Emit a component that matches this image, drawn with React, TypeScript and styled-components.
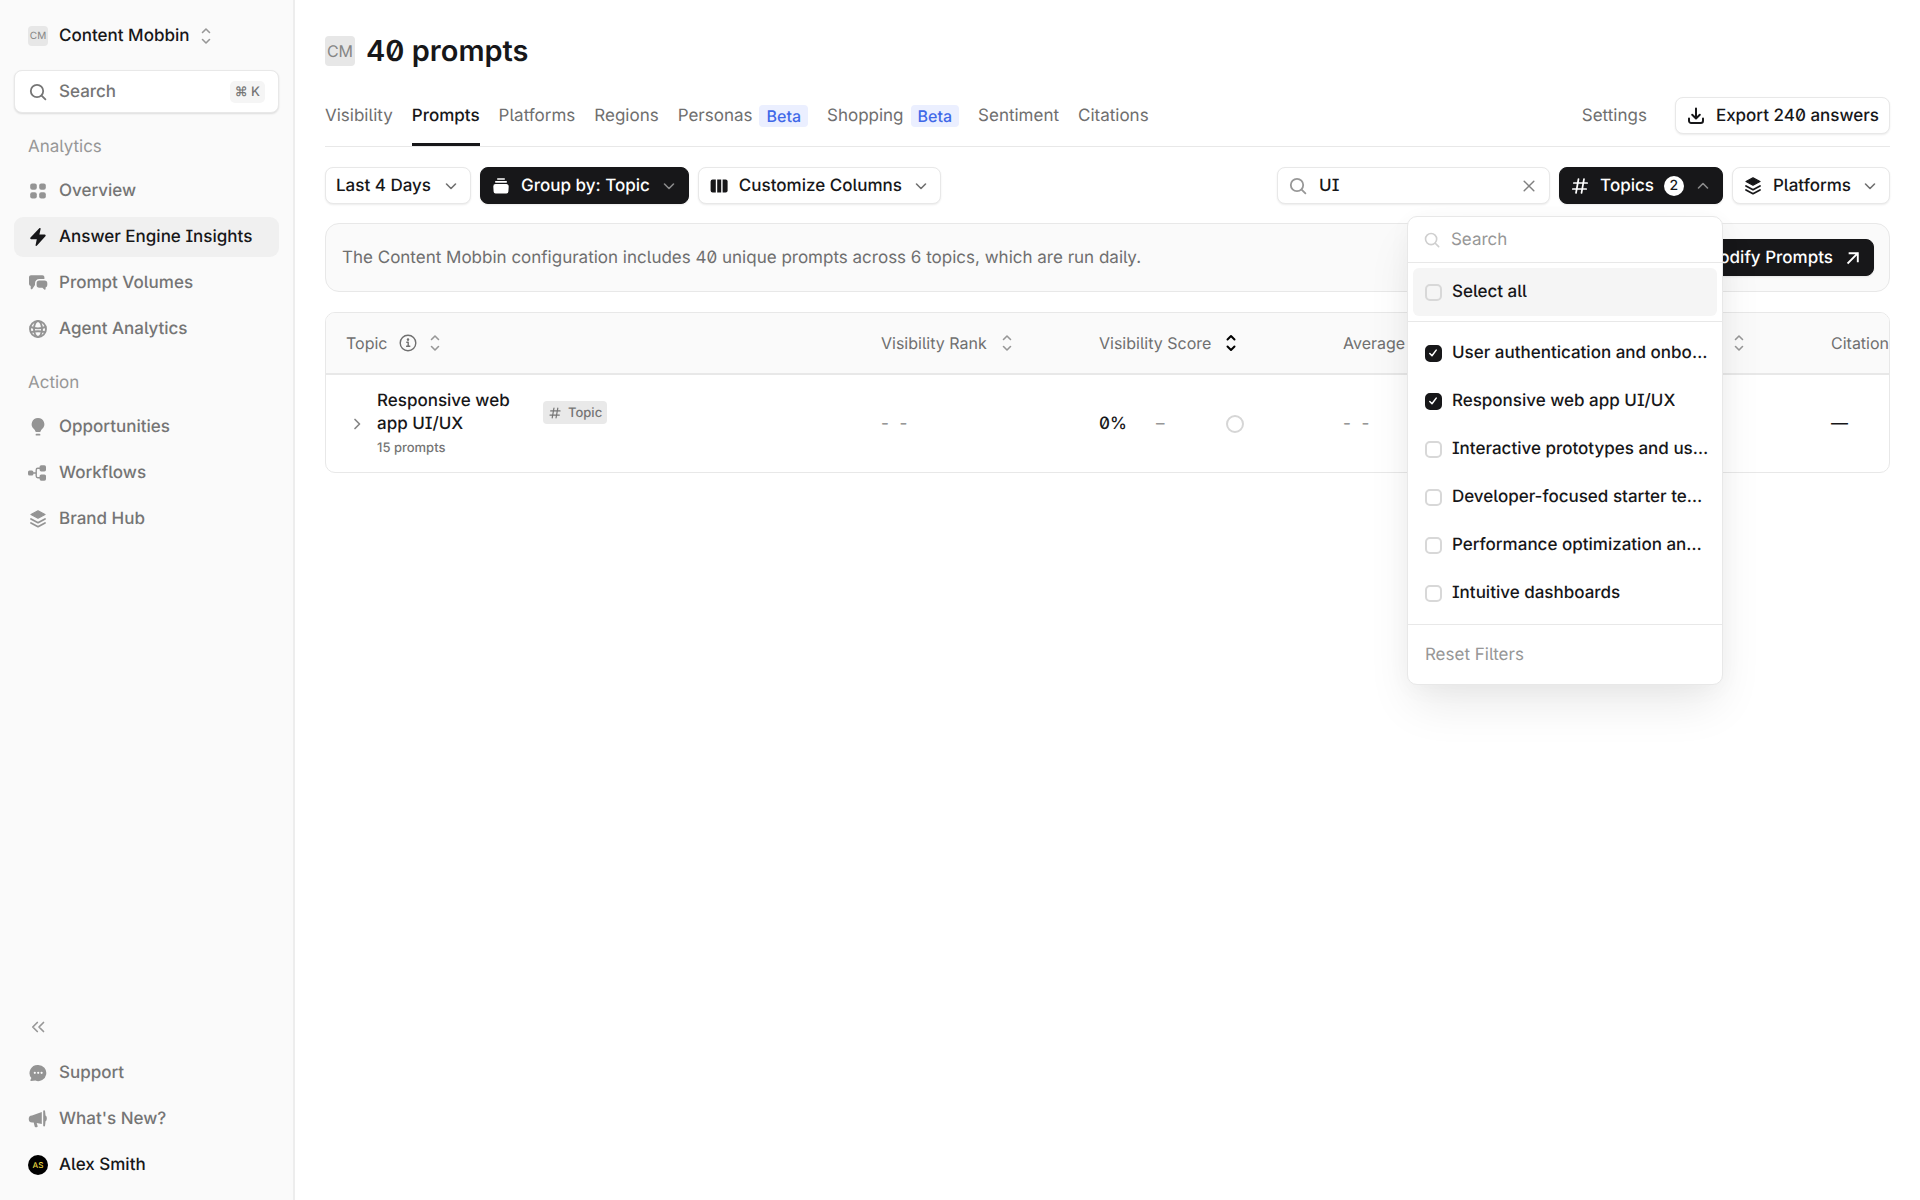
import React, { useState } from "react";
import styled, { createGlobalStyle, css } from "styled-components";

const c = {
  ink: "#171719",
  text: "#757575",
  muted: "#979797",
  line: "#e8e8e8",
  soft: "#fafafa",
};

const GlobalStyle = createGlobalStyle`
  *, *::before, *::after { box-sizing: border-box; }
  body {
    margin: 0;
    background: #fff;
    color: ${c.ink};
    font-family: Inter, "Liberation Sans", sans-serif;
    font-size: 17px;
    font-weight: 500;
    line-height: 24px;
    font-feature-settings: "ss02" 1, "zero" 1, "cv08" 1;
    text-rendering: geometricPrecision;
    -webkit-font-smoothing: antialiased;
  }
  button, input, select {
    font: inherit;
    font-feature-settings: inherit;
    text-rendering: inherit;
    color: inherit;
  }
  button { cursor: pointer; }
  h1, p { margin: 0; }
  svg { display: block; flex: none; }
`;

/* ---------- icons ---------- */

type IconProps = { size?: number };
const stroke = {
  fill: "none",
  stroke: "currentColor",
  strokeLinecap: "round" as const,
  strokeLinejoin: "round" as const,
};

const SearchIcon = ({ size = 20 }: IconProps) => (
  <svg width={size} height={size} viewBox="0 0 20 20" {...stroke} strokeWidth="1.8">
    <circle cx="9" cy="9" r="6.2" />
    <path d="M13.6 13.6 17.4 17.4" />
  </svg>
);
const SortIcon = ({ bold }: { bold?: boolean }) => (
  <svg width="12" height="18" viewBox="0 0 12 18" {...stroke} strokeWidth={bold ? 2 : 1.6}>
    <path d="M2.5 5.5 6 2l3.500 3.500M2.500 12.500 6 16l3.500-3.500" />
  </svg>
);
const ChevronDown = () => (
  <svg width="14" height="14" viewBox="0 0 14 14" {...stroke} strokeWidth="1.6">
    <path d="m2.500 5 4.500 4.500L11.500 5" />
  </svg>
);
const ChevronUp = () => (
  <svg width="14" height="14" viewBox="0 0 14 14" {...stroke} strokeWidth="1.6">
    <path d="m2.500 9 4.500-4.500L11.500 9" />
  </svg>
);
const ChevronRight = () => (
  <svg width="14" height="14" viewBox="0 0 14 14" {...stroke} strokeWidth="1.700">
    <path d="m5 2.500 4.500 4.500L5 11.500" />
  </svg>
);
const GridIcon = () => (
  <svg width="20" height="20" viewBox="0 0 20 20" fill="currentColor">
    <rect x="2.200" y="2.400" width="6.600" height="6.400" rx="2" />
    <rect x="11.200" y="2.400" width="6.600" height="6.400" rx="2" />
    <rect x="2.200" y="11.200" width="6.600" height="6.400" rx="2" />
    <rect x="11.200" y="11.200" width="6.600" height="6.400" rx="2" />
  </svg>
);
const BoltIcon = () => (
  <svg width="20" height="20" viewBox="0 0 20 20" fill="currentColor">
    <path d="M11.300 1.200c.7-.5 1.500 0 1.300.8l-1.200 5.600h5.200c1 0 1.400 1 .8 1.700L9 18.600c-.7.700-1.600.2-1.400-.7l1.200-5.700H3.200c-.9 0-1.300-1-.7-1.600z" />
  </svg>
);
const ChatsIcon = () => (
  <svg width="20" height="20" viewBox="0 0 20 20" fill="currentColor">
    <path d="M3 2.200h11.400c1.100 0 2 .9 2 2v1.900h-5.200a4.200 4.200 0 0 0-4.200 4.200v1.600L4.300 15.900c-.5.700-1.600.5-1.600-.5v-2.500A2 2 0 0 1 1 10.900V4.200c0-1.100.9-2 2-2z" />
    <path d="M11.300 7.600h5.300a2.700 2.700 0 0 1 2.700 2.700v1.700a2.600 2.600 0 0 1-1.700 2.500v1.600c0 .8-.8 1-1.300.5l-1.900-1.900h-3.100a2.700 2.700 0 0 1-2.700-2.700v-1.700a2.700 2.700 0 0 1 2.700-2.700z" />
  </svg>
);
const GlobeIcon = () => (
  <svg width="20" height="20" viewBox="0 0 20 20" {...stroke} strokeWidth="1.900">
    <circle cx="10" cy="10" r="8" />
    <ellipse cx="10" cy="10" rx="4" ry="8" />
    <path d="M2.500 8c4.500 1.600 10.500 1.600 15 0M3 13.200c4.200-1.200 9.800-1.200 14 0" />
  </svg>
);
const BulbIcon = () => (
  <svg width="20" height="20" viewBox="0 0 20 20" fill="currentColor">
    <path d="M10 .9a6.300 6.300 0 0 1 4.100 11.100c-.8.700-1.200 1.500-1.400 2.300-.1.500-.4.700-.9.700H8.200c-.5 0-.8-.2-.9-.7-.2-.8-.6-1.600-1.400-2.300A6.300 6.300 0 0 1 10 .9z" />
    <rect x="7.600" y="16.800" width="4.800" height="1.800" rx=".9" />
  </svg>
);
const FlowIcon = () => (
  <svg width="20" height="20" viewBox="0 0 20 20" fill="currentColor">
    <rect x="0" y="7.600" width="5.400" height="4.800" rx="1.500" />
    <rect x="11.600" y="2.200" width="6.400" height="6.200" rx="1.600" />
    <rect x="11.600" y="11.500" width="6.400" height="6.200" rx="1.600" />
    <path d="M5 10h3.200M12 5.300H9.800c-1 0-1.600.6-1.600 1.600v6.200c0 1 .6 1.600 1.600 1.600H12" fill="none" stroke="currentColor" strokeWidth="1.400" />
  </svg>
);
const LayersIcon = () => (
  <svg width="20" height="20" viewBox="0 0 20 20" {...stroke} strokeWidth="1.800">
    <path d="M10 1.800 17 5.500 10 9.200 3 5.500z" fill="currentColor" strokeWidth="1.200" />
    <path d="m3 10 7 3.700L17 10M3 14l7 3.700L17 14" />
  </svg>
);
const CollapseIcon = () => (
  <svg width="20" height="20" viewBox="0 0 20 20" {...stroke} strokeWidth="1.700">
    <path d="M9.300 5.500 4.800 10l4.500 4.500M15.500 5.500 11 10l4.500 4.500" />
  </svg>
);
const SupportIcon = () => (
  <svg width="20" height="20" viewBox="0 0 20 20">
    <path fill="currentColor" d="M10.200 1.900a8.100 8.100 0 1 1-2.800 15.700L3.200 18.100c-.7.100-1.100-.6-.8-1.100l1-1.900A8.100 8.100 0 0 1 10.200 1.900z" />
    <g fill="#fafafa">
      <circle cx="6.800" cy="9.800" r="1.100" />
      <circle cx="10.200" cy="9.800" r="1.100" />
      <circle cx="13.600" cy="9.800" r="1.100" />
    </g>
  </svg>
);
const HornIcon = () => (
  <svg width="20" height="20" viewBox="0 0 20 20" fill="currentColor">
    <path d="M13.800 3v12L8.700 14l.9 3c.2.700-.1 1.200-.8 1.200H7.600c-.5 0-.8-.3-.9-.8L5.700 13.500H4.500a3.500 3.500 0 0 1-.5-7z" />
    <path d="M15.200 1.800c.1-.9 1.700-.9 1.800 0 .2 1.500.4 3 .5 4.700 1.800.6 1.800 5.200 0 5.800-.1 1.700-.3 3.200-.5 4.500-.1.900-1.700.9-1.800 0z" />
  </svg>
);
const StackIcon = () => (
  <svg width="20" height="20" viewBox="0 0 20 20" fill="currentColor">
    <rect x="6" y="2.200" width="8" height="1.500" rx=".7" />
    <rect x="4" y="5" width="12" height="1.700" rx=".8" />
    <path d="M4.600 8h10.800c1.300 0 2.400 1.100 2.300 2.400l-.3 5.200a2 2 0 0 1-2 1.900H4.600a2 2 0 0 1-2-1.900l-.3-5.200A2.300 2.300 0 0 1 4.600 8z" />
  </svg>
);
const ColumnsIcon = () => (
  <svg width="20" height="20" viewBox="0 0 20 20" fill="currentColor">
    <path d="M3.600 3.500h3.200v13H3.600A2 2 0 0 1 1.600 14.500v-9a2 2 0 0 1 2-2z" />
    <rect x="8.200" y="3.500" width="4" height="13" />
    <path d="M13.600 3.500h3a2 2 0 0 1 2 2v9a2 2 0 0 1-2 2h-3z" />
  </svg>
);
const HashIcon = ({ size = 20 }: IconProps) => (
  <svg width={size} height={size} viewBox="0 0 20 20" {...stroke} strokeWidth="1.700">
    <path d="M8.500 3 6 17M14 3l-2.500 14M3.800 7h13.400M2.800 13h13.400" />
  </svg>
);
const DownloadIcon = () => (
  <svg width="20" height="20" viewBox="0 0 20 20" {...stroke} strokeWidth="2">
    <path d="M10 2.500v9.800M6.200 8.800 10 12.500l3.800-3.700M3 12.500v2.300a2.200 2.200 0 0 0 2.200 2.200h9.600a2.200 2.200 0 0 0 2.200-2.200v-2.300" />
  </svg>
);
const CloseIcon = () => (
  <svg width="14" height="14" viewBox="0 0 14 14" {...stroke} strokeWidth="1.500">
    <path d="m2.200 2.200 9.600 9.600M11.800 2.200l-9.600 9.600" />
  </svg>
);
const ArrowOutIcon = () => (
  <svg width="20" height="20" viewBox="0 0 20 20" {...stroke} strokeWidth="1.900" strokeLinecap="square" strokeLinejoin="miter">
    <path d="M5.200 14.800 14.600 5.400M6.600 5.200h8.200v8.200" />
  </svg>
);
const InfoIcon = () => (
  <svg width="18" height="18" viewBox="0 0 18 18" {...stroke} strokeWidth="1.400">
    <circle cx="9" cy="9" r="7.800" />
    <path d="M7.800 8.300H9.200v3.900M7.600 12.300h3.200" />
    <circle cx="9" cy="5.600" r=".6" fill="currentColor" />
  </svg>
);
const TickIcon = () => (
  <svg width="16" height="16" viewBox="0 0 16 16" {...stroke} strokeWidth="1.500">
    <path d="m4.800 8.500 2.200 2.200 4.200-5.600" />
  </svg>
);

/* ---------- shell ---------- */

const Shell = styled.div`
  display: grid;
  grid-template-columns: 295px minmax(0, 1fr);
  min-height: 100vh;
`;
const Sidebar = styled.aside`
  display: flex;
  flex-direction: column;
  padding: 15px 14px;
  background: ${c.soft};
  border-right: 2px solid #ededed;
`;
const Initials = styled.span<{ $size: number }>`
  display: grid;
  place-items: center;
  flex: none;
  width: ${(p) => p.$size}px;
  height: ${(p) => p.$size}px;
  border-radius: 4px;
  background: #e7e7e7;
  color: #858585;
  font-size: ${(p) => (p.$size > 20 ? 16 : 10)}px;
  line-height: 1;
  font-weight: 400;
`;
const Workspace = styled.button`
  display: flex;
  align-items: center;
  gap: 11px;
  height: 41px;
  padding: 0 14px;
  border: 0;
  background: none;
  svg { color: ${c.muted}; }
`;
const GlobalSearch = styled.label`
  display: flex;
  align-items: center;
  gap: 11px;
  height: 43px;
  margin: 14px 0 20px;
  padding: 0 13px;
  border: 1px solid ${c.line};
  border-radius: 8px;
  background: #fff;
  box-shadow: 0 1px 2px rgba(0, 0, 0, 0.12);
  color: ${c.text};
`;
const PlainInput = styled.input<{ $placeholder?: string }>`
  flex: 1;
  min-width: 0;
  padding: 0;
  border: 0;
  outline: 0;
  background: none;
  &::placeholder { color: ${(p) => p.$placeholder ?? c.text}; opacity: 1; }
`;
const Kbd = styled.kbd`
  padding: 0 5px;
  border-radius: 5px;
  background: #f5f5f5;
  font-family: inherit;
  font-size: 13px;
  line-height: 22px;
`;
const NavGroup = styled.nav`
  display: flex;
  flex-direction: column;
  gap: 6px;
  margin-bottom: 20px;
`;
const NavLabel = styled.span`
  padding: 2px 14px 6px;
  color: ${c.muted};
  font-weight: 400;
`;
const NavLink = styled.a<{ $active?: boolean; $dark?: boolean }>`
  display: flex;
  align-items: center;
  gap: 11px;
  height: 40px;
  padding: 0 14px;
  border-radius: 9px;
  color: ${(p) => (p.$active || p.$dark ? c.ink : c.text)};
  text-decoration: none;
  ${(p) => p.$active && css`background: #f0f0f0;`}
  svg { color: ${(p) => (p.$active ? c.ink : "#949494")}; }
`;
const SidebarFoot = styled.div`
  display: flex;
  flex-direction: column;
  gap: 6px;
  margin-top: auto;
`;
const CollapseButton = styled.button`
  display: flex;
  align-items: center;
  height: 40px;
  padding: 0 14px;
  border: 0;
  background: none;
  color: ${c.muted};
`;
const Avatar = styled.span`
  display: grid;
  place-items: center;
  width: 20px;
  height: 20px;
  border-radius: 50%;
  background: #000;
  color: #e6d640;
  font-size: 8px;
  line-height: 1;
`;

const Main = styled.main`
  display: flex;
  flex-direction: column;
  padding: 33px 30px 30px;
`;
const TitleRow = styled.header`
  display: flex;
  align-items: center;
  gap: 11px;
  height: 36px;
`;
const Title = styled.h1`
  font-size: 29px;
  line-height: 36px;
  font-weight: 600;
`;
const TabBar = styled.div`
  display: flex;
  align-items: center;
  justify-content: space-between;
  height: 62px;
  margin-top: 16px;
  border-bottom: 1px solid ${c.line};
`;
const Tabs = styled.nav`
  display: flex;
  align-self: stretch;
  gap: 19px;
`;
const Tab = styled.a<{ $active?: boolean }>`
  display: flex;
  align-items: center;
  gap: 7px;
  height: 61px;
  padding-top: 4px;
  border-bottom: 3px solid ${(p) => (p.$active ? c.ink : "transparent")};
  color: ${(p) => (p.$active ? c.ink : "#6f6f6f")};
  font-weight: ${(p) => (p.$active ? 500 : 400)};
  text-decoration: none;
`;
const Beta = styled.span`
  padding: 0 7px;
  border-radius: 4px;
  background: #ebefff;
  color: #3f68e8;
  font-size: 16px;
  font-weight: 500;
  line-height: 22px;
`;
const TabActions = styled.div`
  display: flex;
  align-items: center;
  gap: 28px;
`;
const SettingsLink = styled.a`
  color: #6f6f6f;
  font-weight: 400;
  text-decoration: none;
`;

/* ---------- controls ---------- */

const surface = css<{ $dark?: boolean }>`
  display: flex;
  align-items: center;
  height: 37px;
  border: 1px solid ${(p) => (p.$dark ? c.ink : c.line)};
  border-radius: 8px;
  background: ${(p) => (p.$dark ? c.ink : "#fff")};
  color: ${(p) => (p.$dark ? "#fff" : c.ink)};
  box-shadow: 0 1px 2px rgba(0, 0, 0, 0.08);
  white-space: nowrap;
`;
const Button = styled.button<{ $dark?: boolean }>`
  ${surface}
  gap: 10px;
  padding: 0 10px;
`;
const Caret = styled.span<{ $dark?: boolean }>`
  margin: 0 2px;
  color: ${(p) => (p.$dark ? "#8a8a8a" : "#707070")};
`;
const RangeField = styled.label`
  ${surface}
  padding: 0 12px 0 10px;
  gap: 12px;
  color: #707070;
`;
const RangeSelect = styled.select`
  appearance: none;
  padding: 0;
  border: 0;
  outline: 0;
  background: none;
  color: ${c.ink};
`;
const Toolbar = styled.div`
  display: flex;
  gap: 9px;
  margin-top: 20px;
`;
const FilterField = styled.label`
  ${surface}
  gap: 11px;
  width: 273px;
  margin-left: auto;
  padding: 0 13px 0 10px;
  > svg { color: ${c.muted}; }
`;
const ClearButton = styled.button`
  padding: 0;
  border: 0;
  background: none;
  color: #808080;
`;
const Count = styled.span`
  display: grid;
  place-items: center;
  width: 20px;
  height: 20px;
  border-radius: 50%;
  background: #fff;
  color: ${c.ink};
  font-size: 14px;
  line-height: 20px;
`;
const Anchor = styled.div`
  position: relative;
`;

/* ---------- topics menu ---------- */

const Menu = styled.div`
  position: absolute;
  top: 49px;
  right: 0;
  z-index: 5;
  width: 316px;
  border: 1px solid ${c.line};
  border-radius: 10px;
  background: #fff;
  box-shadow: 0 24px 48px -6px rgba(0, 0, 0, 0.09), 0 4px 24px rgba(0, 0, 0, 0.03);
`;
const MenuSearch = styled.label`
  display: flex;
  align-items: center;
  gap: 10px;
  height: 46px;
  padding: 0 15px;
  border-bottom: 1px solid ${c.line};
  font-weight: 400;
  > svg { color: #cfcfcf; }
`;
const MenuGroup = styled.div<{ $pad: number }>`
  display: flex;
  flex-direction: column;
  padding: ${(p) => p.$pad}px 5px;
  border-bottom: 1px solid ${c.line};
`;
const MenuItem = styled.label<{ $hover?: boolean }>`
  display: flex;
  align-items: center;
  gap: 10px;
  height: 48px;
  padding: 0 7px 0 12px;
  border-radius: 6px;
  background: ${(p) => (p.$hover ? "#f5f5f5" : "none")};
`;
const MenuText = styled.span`
  overflow: hidden;
  text-overflow: ellipsis;
  white-space: nowrap;
`;
const CheckBox = styled.span`
  display: grid;
  flex: none;
  width: 17px;
  height: 17px;
  > * { grid-area: 1 / 1; place-self: center; }
  svg { color: transparent; pointer-events: none; }
  input:checked + svg { color: #fff; }
`;
const CheckInput = styled.input`
  appearance: none;
  width: 17px;
  height: 17px;
  margin: 0;
  border: 2px solid #d8d8d8;
  border-radius: 5px;
  background: transparent;
  &:checked { border-color: ${c.ink}; background: ${c.ink}; }
`;
const ResetButton = styled.button`
  width: 100%;
  height: 59px;
  padding: 0 17px;
  border: 0;
  background: none;
  color: ${c.muted};
  font-weight: 400;
  text-align: left;
`;

/* ---------- banner and table ---------- */

const Banner = styled.section`
  display: flex;
  align-items: center;
  justify-content: space-between;
  height: 69px;
  margin-top: 19px;
  padding: 0 15px 0 16px;
  border: 1px solid ${c.line};
  border-radius: 14px;
  background: ${c.soft};
  color: #6f6f6f;
  font-weight: 400;
  button { font-weight: 500; }
`;
const TableFrame = styled.div`
  margin-top: 20px;
  overflow-x: auto;
  scrollbar-width: none;
  border: 1px solid ${c.line};
  border-radius: 10px;
`;
const Table = styled.table`
  width: 100%;
  min-width: 1700px;
  table-layout: fixed;
  border-collapse: collapse;
  text-align: left;
`;
const Th = styled.th`
  height: 61px;
  padding: 0 20px;
  border-bottom: 2px solid ${c.line};
  background: ${c.soft};
  color: #6f6f6f;
  font-size: 16px;
  font-weight: 400;
`;
const HeadCell = styled.div<{ $gap?: number }>`
  display: flex;
  align-items: center;
  gap: ${(p) => p.$gap ?? 14}px;
  white-space: nowrap;
`;
const SortButton = styled.button<{ $active?: boolean }>`
  padding: 0;
  border: 0;
  background: none;
  color: ${(p) => (p.$active ? "#000" : c.muted)};
`;
const Td = styled.td`
  height: 98px;
  padding: 0 20px;
`;
const TopicCell = styled.div`
  display: flex;
  align-items: center;
  gap: 13px;
`;
const ExpandButton = styled.button`
  margin-left: 4px;
  padding: 0;
  border: 0;
  background: none;
  color: #858585;
`;
const TopicGrid = styled.div`
  display: grid;
  grid-template-columns: 140px auto;
  column-gap: 26px;
  align-items: center;
  padding-top: 2px;
`;
const TopicName = styled.span`
  line-height: 23px;
`;
const PromptCount = styled.span`
  color: ${c.text};
  font-size: 13px;
`;
const Tag = styled.span`
  display: flex;
  align-items: center;
  gap: 6px;
  height: 23px;
  padding: 0 5px;
  border-radius: 4px;
  background: #e9e9e9;
  color: ${c.text};
  font-size: 13px;
`;
const Blank = styled.span`
  color: ${c.muted};
  word-spacing: 6px;
`;
const Score = styled.div`
  display: grid;
  grid-template-columns: 57px 70px 18px;
  align-items: center;
`;
const Ring = styled.span`
  width: 18px;
  height: 18px;
  border: 2px solid #d6d6d6;
  border-radius: 50%;
`;

/* ---------- data ---------- */

const analytics = [
  { label: "Overview", icon: <GridIcon /> },
  { label: "Answer Engine Insights", icon: <BoltIcon />, active: true },
  { label: "Prompt Volumes", icon: <ChatsIcon /> },
  { label: "Agent Analytics", icon: <GlobeIcon /> },
];
const actions = [
  { label: "Opportunities", icon: <BulbIcon /> },
  { label: "Workflows", icon: <FlowIcon /> },
  { label: "Brand Hub", icon: <LayersIcon /> },
];
const tabs = [
  { label: "Visibility" },
  { label: "Prompts", active: true },
  { label: "Platforms" },
  { label: "Regions" },
  { label: "Personas", beta: true },
  { label: "Shopping", beta: true },
  { label: "Sentiment" },
  { label: "Citations" },
];
const topics = [
  "User authentication and onboarding",
  "Responsive web app UI/UX",
  "Interactive prototypes and user testing",
  "Developer-focused starter templates",
  "Performance optimization and scaling",
  "Intuitive dashboards",
];

function Check({ checked, onChange }: { checked: boolean; onChange: () => void }) {
  return (
    <CheckBox>
      <CheckInput type="checkbox" checked={checked} onChange={onChange} />
      <TickIcon />
    </CheckBox>
  );
}

function Sort({ name, active }: { name: string; active?: boolean }) {
  return (
    <SortButton type="button" $active={active} aria-label={`Sort by ${name}`}>
      <SortIcon bold={active} />
    </SortButton>
  );
}

function TopicsMenu({ picked, setPicked }: { picked: string[]; setPicked: (next: string[]) => void }) {
  const toggle = (t: string) =>
    setPicked(picked.includes(t) ? picked.filter((p) => p !== t) : [...picked, t]);
  const all = picked.length === topics.length;
  return (
    <Menu>
      <MenuSearch>
        <SearchIcon size={18} />
        <PlainInput $placeholder={c.muted} placeholder="Search" aria-label="Search topics" />
      </MenuSearch>
      <MenuGroup $pad={5}>
        <MenuItem $hover>
          <Check checked={all} onChange={() => setPicked(all ? [] : topics)} />
          <MenuText>Select all</MenuText>
        </MenuItem>
      </MenuGroup>
      <MenuGroup $pad={7}>
        {topics.map((t) => (
          <MenuItem key={t}>
            <Check checked={picked.includes(t)} onChange={() => toggle(t)} />
            <MenuText>{t}</MenuText>
          </MenuItem>
        ))}
      </MenuGroup>
      <ResetButton type="button" onClick={() => setPicked([])}>Reset Filters</ResetButton>
    </Menu>
  );
}

export default function App() {
  const [query, setQuery] = useState("UI");
  const [open, setOpen] = useState(true);
  const [picked, setPicked] = useState<string[]>(topics.slice(0, 2));

  return (
    <>
      <GlobalStyle />
      <Shell>
        <Sidebar>
          <Workspace type="button">
            <Initials $size={20}>CM</Initials>
            Content Mobbin
            <SortIcon />
          </Workspace>
          <GlobalSearch>
            <SearchIcon />
            <PlainInput placeholder="Search" aria-label="Search" />
            <Kbd>⌘ K</Kbd>
          </GlobalSearch>
          <NavGroup aria-label="Analytics">
            <NavLabel>Analytics</NavLabel>
            {analytics.map((n) => (
              <NavLink key={n.label} href="#" $active={n.active}>{n.icon}{n.label}</NavLink>
            ))}
          </NavGroup>
          <NavGroup aria-label="Action">
            <NavLabel>Action</NavLabel>
            {actions.map((n) => (
              <NavLink key={n.label} href="#">{n.icon}{n.label}</NavLink>
            ))}
          </NavGroup>
          <SidebarFoot>
            <CollapseButton type="button" aria-label="Collapse sidebar"><CollapseIcon /></CollapseButton>
            <NavLink href="#"><SupportIcon />Support</NavLink>
            <NavLink href="#"><HornIcon />What's New?</NavLink>
            <NavLink href="#" $dark><Avatar>AS</Avatar>Alex Smith</NavLink>
          </SidebarFoot>
        </Sidebar>

        <Main>
          <TitleRow>
            <Initials $size={30}>CM</Initials>
            <Title>40 prompts</Title>
          </TitleRow>

          <TabBar>
            <Tabs>
              {tabs.map((t) => (
                <Tab key={t.label} href="#" $active={t.active}>
                  {t.label}
                  {t.beta && <Beta>Beta</Beta>}
                </Tab>
              ))}
            </Tabs>
            <TabActions>
              <SettingsLink href="#">Settings</SettingsLink>
              <Button type="button"><DownloadIcon />Export 240 answers</Button>
            </TabActions>
          </TabBar>

          <Toolbar>
            <RangeField>
              <RangeSelect aria-label="Date range"><option>Last 4 Days</option></RangeSelect>
              <ChevronDown />
            </RangeField>
            <Button type="button" $dark>
              <StackIcon />Group by: Topic<Caret $dark><ChevronDown /></Caret>
            </Button>
            <Button type="button">
              <ColumnsIcon />Customize Columns<Caret><ChevronDown /></Caret>
            </Button>
            <FilterField>
              <SearchIcon />
              <PlainInput value={query} onChange={(e) => setQuery(e.target.value)} aria-label="Filter prompts" />
              <ClearButton type="button" aria-label="Clear" onClick={() => setQuery("")}><CloseIcon /></ClearButton>
            </FilterField>
            <Anchor>
              <Button type="button" $dark aria-expanded={open} onClick={() => setOpen(!open)}>
                <HashIcon />Topics<Count>{picked.length}</Count>
                <Caret $dark><ChevronUp /></Caret>
              </Button>
              {open && <TopicsMenu picked={picked} setPicked={setPicked} />}
            </Anchor>
            <Button type="button">
              <LayersIcon />Platforms<Caret><ChevronDown /></Caret>
            </Button>
          </Toolbar>

          <Banner>
            <p>The Content Mobbin configuration includes 40 unique prompts across 6 topics, which are run daily.</p>
            <Button type="button" $dark>Modify Prompts<ArrowOutIcon /></Button>
          </Banner>

          <TableFrame>
            <Table>
              <colgroup>
                <col width="535" />
                <col width="218" />
                <col width="244" />
                <col width="242" />
                <col width="246" />
                <col />
              </colgroup>
              <thead>
                <tr>
                  <Th><HeadCell $gap={12}>Topic<InfoIcon /><Sort name="topic" /></HeadCell></Th>
                  <Th><HeadCell>Visibility Rank<Sort name="visibility rank" /></HeadCell></Th>
                  <Th><HeadCell>Visibility Score<Sort name="visibility score" active /></HeadCell></Th>
                  <Th><HeadCell>Average Position<Sort name="average position" /></HeadCell></Th>
                  <Th><HeadCell $gap={24}>Total Executions<Sort name="executions" /></HeadCell></Th>
                  <Th><HeadCell>Citation Share<Sort name="citation share" /></HeadCell></Th>
                </tr>
              </thead>
              <tbody>
                <tr>
                  <Td>
                    <TopicCell>
                      <ExpandButton type="button" aria-label="Expand topic"><ChevronRight /></ExpandButton>
                      <TopicGrid>
                        <TopicName>Responsive web app UI/UX</TopicName>
                        <Tag><HashIcon size={14} />Topic</Tag>
                        <PromptCount>15 prompts</PromptCount>
                      </TopicGrid>
                    </TopicCell>
                  </Td>
                  <Td><Blank>- -</Blank></Td>
                  <Td><Score>0%<Blank>–</Blank><Ring /></Score></Td>
                  <Td><Blank>- -</Blank></Td>
                  <Td />
                  <Td>—</Td>
                </tr>
              </tbody>
            </Table>
          </TableFrame>
        </Main>
      </Shell>
    </>
  );
}
